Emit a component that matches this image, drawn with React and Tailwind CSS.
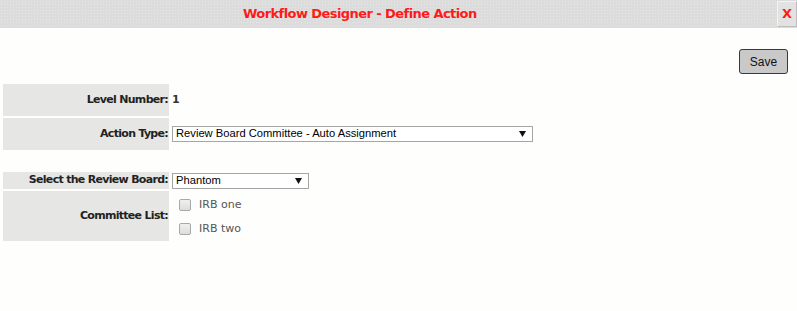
import React from "react";

const verdana = "font-['DejaVu_Sans',Verdana,sans-serif]";
const arial = "font-['Liberation_Sans',Arial,sans-serif]";

function Select({ value, width }) {
  return (
    <div
      className={`flex items-center justify-between h-[16px] border border-[#a6a6a6] bg-white pl-[3px] pr-[6px] ${arial} text-[11.2px] text-black leading-none`}
      style={{ width }}
    >
      <span>{value}</span>
      <svg width="7" height="6" viewBox="0 0 7 6">
        <path d="M0 0H7L3.5 6Z" fill="#111" />
      </svg>
    </div>
  );
}

function Checkbox({ label }) {
  return (
    <div className="flex items-center h-[24px] pl-[7px]">
      <div className="w-[12px] h-[12px] rounded-[2px] border border-[#a9a9a9] bg-[linear-gradient(#f0f0f0,#dcdcdc)]" />
      <span className={`ml-[8px] ${verdana} text-[11px] text-[#555]`}>{label}</span>
    </div>
  );
}

function Label({ children, h }) {
  return (
    <div
      className={`w-[166px] flex items-center justify-end pr-[1px] bg-[#e6e6e4] ${verdana} text-[11px] font-bold tracking-[-0.7px] text-[#222]`}
      style={{ height: h }}
    >
      {children}
    </div>
  );
}

export default function App() {
  return (
    <div className="w-[797px] h-[311px] bg-[#fefefc] overflow-hidden">
      <div className="h-[28px] flex items-start bg-[#dcdcdc] bg-[radial-gradient(#e6e6e6_0.8px,transparent_0.8px)] bg-[length:3px_3px]">
        <div className={`ml-[243px] mt-[6px] ${verdana} text-[13px] font-bold tracking-[-0.57px] text-[#ff1a1a] leading-[16px]`}>
          Workflow Designer - Define Action
        </div>
        <div className={`ml-auto mt-[1px] w-[20px] h-[26px] flex items-center justify-center bg-[#e2e2e2] border-l border-t border-[#f4f4f4] border-r border-b border-r-[#bdbdbd] border-b-[#bdbdbd] ${verdana} text-[13px] font-bold text-[#ff1a1a]`}>
          X
        </div>
      </div>

      <div className="flex justify-end pr-[9px] pt-[21px]">
        <button className={`w-[49px] h-[25px] rounded-[3px] border border-[#3a3a3a] bg-[#c9c9c9] ${arial} text-[12px] text-[#111]`}>
          Save
        </button>
      </div>

      <div className="mt-[10px] pl-[3px] flex flex-col gap-[2px]">
        <div className="flex gap-[3px]">
          <Label h={32}>Level Number:</Label>
          <div className={`flex items-center ${verdana} text-[11px] font-bold text-[#333]`}>1</div>
        </div>
        <div className="flex gap-[3px]">
          <Label h={32}>Action Type:</Label>
          <div className="flex items-center">
            <Select value="Review Board Committee - Auto Assignment" width={361} />
          </div>
        </div>
        <div className="h-[18px]" />
        <div className="flex gap-[3px]">
          <Label h={17}>Select the Review Board:</Label>
          <div className="flex items-center">
            <Select value="Phantom" width={137} />
          </div>
        </div>
        <div className="flex gap-[3px]">
          <Label h={50}>Committee List:</Label>
          <div className="flex flex-col py-[2px]">
            <Checkbox label="IRB one" />
            <Checkbox label="IRB two" />
          </div>
        </div>
      </div>
    </div>
  );
}
